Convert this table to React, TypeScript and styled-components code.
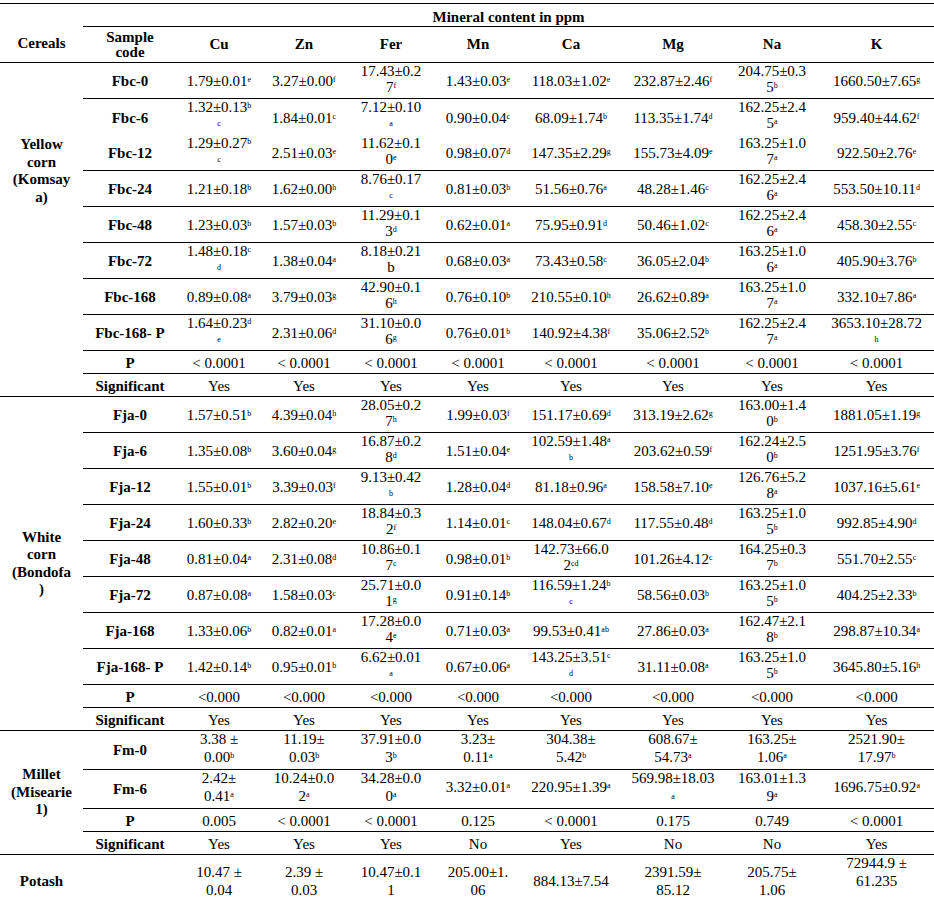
import React from "react";
import styled, { createGlobalStyle } from "styled-components";

// Tabla de minerales: una tabla real, con bordes solo horizontales

const GlobalStyle = createGlobalStyle`
  body {
    margin: 0;
    background: #fff;
  }
`;

const rule = "1px solid #000";

const Sheet = styled.table`
  width: 934px;
  margin-top: 3px;
  border-collapse: separate;
  border-spacing: 0;
  table-layout: fixed;
  font-family: "Liberation Serif", "Times New Roman", serif;
  font-size: 15px;
  color: #000;
`;

const Col = styled.col<{ $w: number }>`
  width: ${(p) => p.$w}px;
`;

const Row = styled.tr<{ $h: number }>`
  height: ${(p) => p.$h}px;
`;

const HeadCell = styled.th<{ $top?: boolean; $pad?: number }>`
  padding: ${(p) => p.$pad ?? 0}px 0 0;
  border-top: ${(p) => (p.$top ? rule : "none")};
  border-bottom: ${rule};
  font-weight: bold;
  text-align: center;
  vertical-align: middle;
  line-height: 15px;
  white-space: nowrap;
`;

const GroupCell = styled.th<{ $end?: boolean }>`
  padding: 0;
  border-bottom: ${(p) => (p.$end ? rule : "none")};
  font-weight: bold;
  line-height: 17.5px;
  text-align: center;
  vertical-align: middle;
  white-space: nowrap;
`;

const LabelCell = styled.th<{ $line?: boolean; $pt?: number }>`
  padding: ${(p) => p.$pt ?? 2}px 0 0;
  border-bottom: ${(p) => (p.$line ? rule : "none")};
  font-weight: bold;
  line-height: 15px;
  text-align: center;
  vertical-align: middle;
  white-space: nowrap;
`;

// $wrapTop: las celdas partidas en dos líneas van arriba, como en Word
const ValueCell = styled.td<{ $line?: boolean; $lh: number; $pt: number; $pb: number; $wrapTop?: boolean }>`
  padding: ${(p) => (p.$wrapTop ? 1 : p.$pt)}px 0 ${(p) => p.$pb}px;
  border-bottom: ${(p) => (p.$line ? rule : "none")};
  line-height: ${(p) => (p.$wrapTop ? 15.5 : p.$lh)}px;
  text-align: center;
  vertical-align: ${(p) => (p.$wrapTop ? "top" : "middle")};
  white-space: nowrap;
`;

const Line = styled.span`
  display: block;
`;

const Sup = styled.span<{ $alone?: boolean }>`
  font-size: 8px;
  line-height: 0;
  vertical-align: ${(p) => (p.$alone ? "2px" : "4.5px")};
`;

// "a|b" = dos líneas, "x^y" = y en superíndice
const Value = ({ text }: { text: string }) => (
  <>
    {text.split("|").map((line, i) => {
      const [main, sup] = line.split("^");
      return (
        <Line key={i}>
          {main}
          {sup !== undefined && <Sup $alone={main === ""}>{sup}</Sup>}
        </Line>
      );
    })}
  </>
);

interface Sample {
  code: string;
  v: string[];
  noLine?: boolean;
}

interface Group {
  name: string[];
  span: number;
  h: number;
  lh: number;
  pt: number;
  pb: number;
  wrapTop: boolean;
  rows: Sample[];
  p: string[];
  sig: string[];
}

const widths = [83, 94, 84, 86, 88, 86, 100, 104, 94, 115];
const minerals = ["Cu", "Zn", "Fer", "Mn", "Ca", "Mg", "Na", "K"];

const yes = Array(8).fill("Yes");

const groups: Group[] = [
  {
    name: ["Yellow", "corn", "(Komsay", "a)"],
    span: 6,
    h: 36,
    lh: 15,
    pt: 2,
    pb: 0,
    wrapTop: true,
    rows: [
      { code: "Fbc-0", v: ["1.79±0.01^e", "3.27±0.00^f", "17.43±0.2|7^f", "1.43±0.03^e", "118.03±1.02^e", "232.87±2.46^f", "204.75±0.3|5^b", "1660.50±7.65^g"] },
      { code: "Fbc-6", noLine: true, v: ["1.32±0.13^b|^c", "1.84±0.01^c", "7.12±0.10|^a", "0.90±0.04^c", "68.09±1.74^b", "113.35±1.74^d", "162.25±2.4|5^a", "959.40±44.62^f"] },
      { code: "Fbc-12", v: ["1.29±0.27^b|^c", "2.51±0.03^e", "11.62±0.1|0^e", "0.98±0.07^d", "147.35±2.29^g", "155.73±4.09^e", "163.25±1.0|7^a", "922.50±2.76^e"] },
      { code: "Fbc-24", v: ["1.21±0.18^b", "1.62±0.00^h", "8.76±0.17|^c", "0.81±0.03^b", "51.56±0.76^a", "48.28±1.46^c", "162.25±2.4|6^a", "553.50±10.11^d"] },
      { code: "Fbc-48", v: ["1.23±0.03^b", "1.57±0.03^b", "11.29±0.1|3^d", "0.62±0.01^a", "75.95±0.91^d", "50.46±1.02^c", "162.25±2.4|6^a", "458.30±2.55^c"] },
      { code: "Fbc-72", v: ["1.48±0.18^c|^d", "1.38±0.04^a", "8.18±0.21|b", "0.68±0.03^a", "73.43±0.58^c", "36.05±2.04^b", "163.25±1.0|6^a", "405.90±3.76^b"] },
      { code: "Fbc-168", v: ["0.89±0.08^a", "3.79±0.03^g", "42.90±0.1|6^h", "0.76±0.10^b", "210.55±0.10^h", "26.62±0.89^a", "163.25±1.0|7^a", "332.10±7.86^a"] },
      { code: "Fbc-168- P", v: ["1.64±0.23^d|^e", "2.31±0.06^d", "31.10±0.0|6^g", "0.76±0.01^b", "140.92±4.38^f", "35.06±2.52^b", "162.25±2.4|7^a", "3653.10±28.72|^h"] },
    ],
    p: Array(8).fill("< 0.0001"),
    sig: yes,
  },
  {
    name: ["White", "corn", "(Bondofa", ")"],
    span: 10,
    h: 36,
    lh: 15,
    pt: 2,
    pb: 0,
    wrapTop: true,
    rows: [
      { code: "Fja-0", v: ["1.57±0.51^b", "4.39±0.04^h", "28.05±0.2|7^h", "1.99±0.03^f", "151.17±0.69^d", "313.19±2.62^g", "163.00±1.4|0^b", "1881.05±1.19^g"] },
      { code: "Fja-6", v: ["1.35±0.08^b", "3.60±0.04^g", "16.87±0.2|8^d", "1.51±0.04^e", "102.59±1.48^a|^b", "203.62±0.59^f", "162.24±2.5|0^b", "1251.95±3.76^f"] },
      { code: "Fja-12", v: ["1.55±0.01^b", "3.39±0.03^f", "9.13±0.42|^b", "1.28±0.04^d", "81.18±0.96^a", "158.58±7.10^e", "126.76±5.2|8^a", "1037.16±5.61^e"] },
      { code: "Fja-24", v: ["1.60±0.33^b", "2.82±0.20^e", "18.84±0.3|2^f", "1.14±0.01^c", "148.04±0.67^d", "117.55±0.48^d", "163.25±1.0|5^b", "992.85±4.90^d"] },
      { code: "Fja-48", v: ["0.81±0.04^a", "2.31±0.08^d", "10.86±0.1|7^c", "0.98±0.01^b", "142.73±66.0|2^cd", "101.26±4.12^c", "164.25±0.3|7^b", "551.70±2.55^c"] },
      { code: "Fja-72", v: ["0.87±0.08^a", "1.58±0.03^c", "25.71±0.0|1^g", "0.91±0.14^b", "116.59±1.24^b|^c", "58.56±0.03^b", "163.25±1.0|5^b", "404.25±2.33^b"] },
      { code: "Fja-168", v: ["1.33±0.06^b", "0.82±0.01^a", "17.28±0.0|4^e", "0.71±0.03^a", "99.53±0.41^ab", "27.86±0.03^a", "162.47±2.1|8^b", "298.87±10.34^a"] },
      { code: "Fja-168- P", v: ["1.42±0.14^b", "0.95±0.01^b", "6.62±0.01|^a", "0.67±0.06^a", "143.25±3.51^c|^d", "31.11±0.08^a", "163.25±1.0|5^b", "3645.80±5.16^h"] },
    ],
    p: Array(8).fill("<0.000"),
    sig: yes,
  },
  {
    name: ["Millet", "(Misearie", "1)"],
    span: 4,
    h: 36,
    lh: 17.5,
    pt: 0,
    pb: 3,
    wrapTop: false,
    rows: [
      { code: "Fm-0", v: ["3.38 ±|0.00^b", "11.19±|0.03^b", "37.91±0.0|3^b", "3.23±|0.11^a", "304.38±|5.42^b", "608.67±|54.73^a", "163.25±|1.06^a", "2521.90±|17.97^b"] },
      { code: "Fm-6", v: ["2.42±|0.41^a", "10.24±0.0|2^a", "34.28±0.0|0^a", "3.32±0.01^a", "220.95±1.39^a", "569.98±18.03|^a", "163.01±1.3|9^a", "1696.75±0.92^a"] },
    ],
    p: ["0.005", "< 0.0001", "< 0.0001", "0.125", "< 0.0001", "0.175", "0.749", "< 0.0001"],
    sig: ["Yes", "Yes", "Yes", "No", "Yes", "No", "No", "Yes"],
  },
];

const potash = ["10.47 ±|0.04", "2.39 ±|0.03", "10.47±0.1|1", "205.00±1.|06", "884.13±7.54", "2391.59±|85.12", "205.75±|1.06", "72944.9 ±|61.235|\u00a0"];

const renderGroup = (g: Group) => {
  const all = [
    ...g.rows.map((r) => ({ code: r.code, v: r.v, line: !r.noLine, stat: false })),
    { code: "P", v: g.p, line: true, stat: true },
    { code: "Significant", v: g.sig, line: true, stat: true },
  ];
  const last = all.length - 1;

  return all.map((r, i) => (
    <Row key={g.name[0] + r.code} $h={r.stat ? 23 : g.h}>
      {i === 0 && (
        <GroupCell rowSpan={g.span} $end={g.span === all.length}>
          {g.name.map((n) => (
            <Line key={n}>{n}</Line>
          ))}
        </GroupCell>
      )}
      {i >= g.span && <GroupCell $end={i === last} />}
      <LabelCell $line={r.line} $pt={r.stat ? 2 : g.pt}>
        {r.code}
      </LabelCell>
      {r.v.map((t, j) => (
        <ValueCell
          key={minerals[j]}
          $line={r.line}
          $lh={r.stat ? 15 : g.lh}
          $pt={r.stat ? 2 : g.pt}
          $pb={r.stat ? 0 : g.pb}
          $wrapTop={!r.stat && g.wrapTop && t.includes("|")}
        >
          <Value text={t} />
        </ValueCell>
      ))}
    </Row>
  ));
};

export default function App() {
  return (
    <>
      <GlobalStyle />
      <Sheet>
        <colgroup>
          {widths.map((w, i) => (
            <Col key={i} $w={w} />
          ))}
        </colgroup>
        <thead>
          <Row $h={24}>
            <HeadCell rowSpan={2} $top $pad={20}>
              Cereals
            </HeadCell>
            <HeadCell colSpan={9} $top $pad={5}>
              Mineral content in ppm
            </HeadCell>
          </Row>
          <Row $h={36}>
            <HeadCell>
              <Line>Sample</Line>
              <Line>code</Line>
            </HeadCell>
            {minerals.map((m) => (
              <HeadCell key={m}>{m}</HeadCell>
            ))}
          </Row>
        </thead>
        <tbody>
          {groups.map(renderGroup)}
          <Row $h={54}>
            <GroupCell $end>Potash</GroupCell>
            <LabelCell $line />
            {potash.map((t, j) => (
              <ValueCell key={minerals[j]} $line $lh={17.5} $pt={0} $pb={0}>
                <Value text={t} />
              </ValueCell>
            ))}
          </Row>
        </tbody>
      </Sheet>
    </>
  );
}
